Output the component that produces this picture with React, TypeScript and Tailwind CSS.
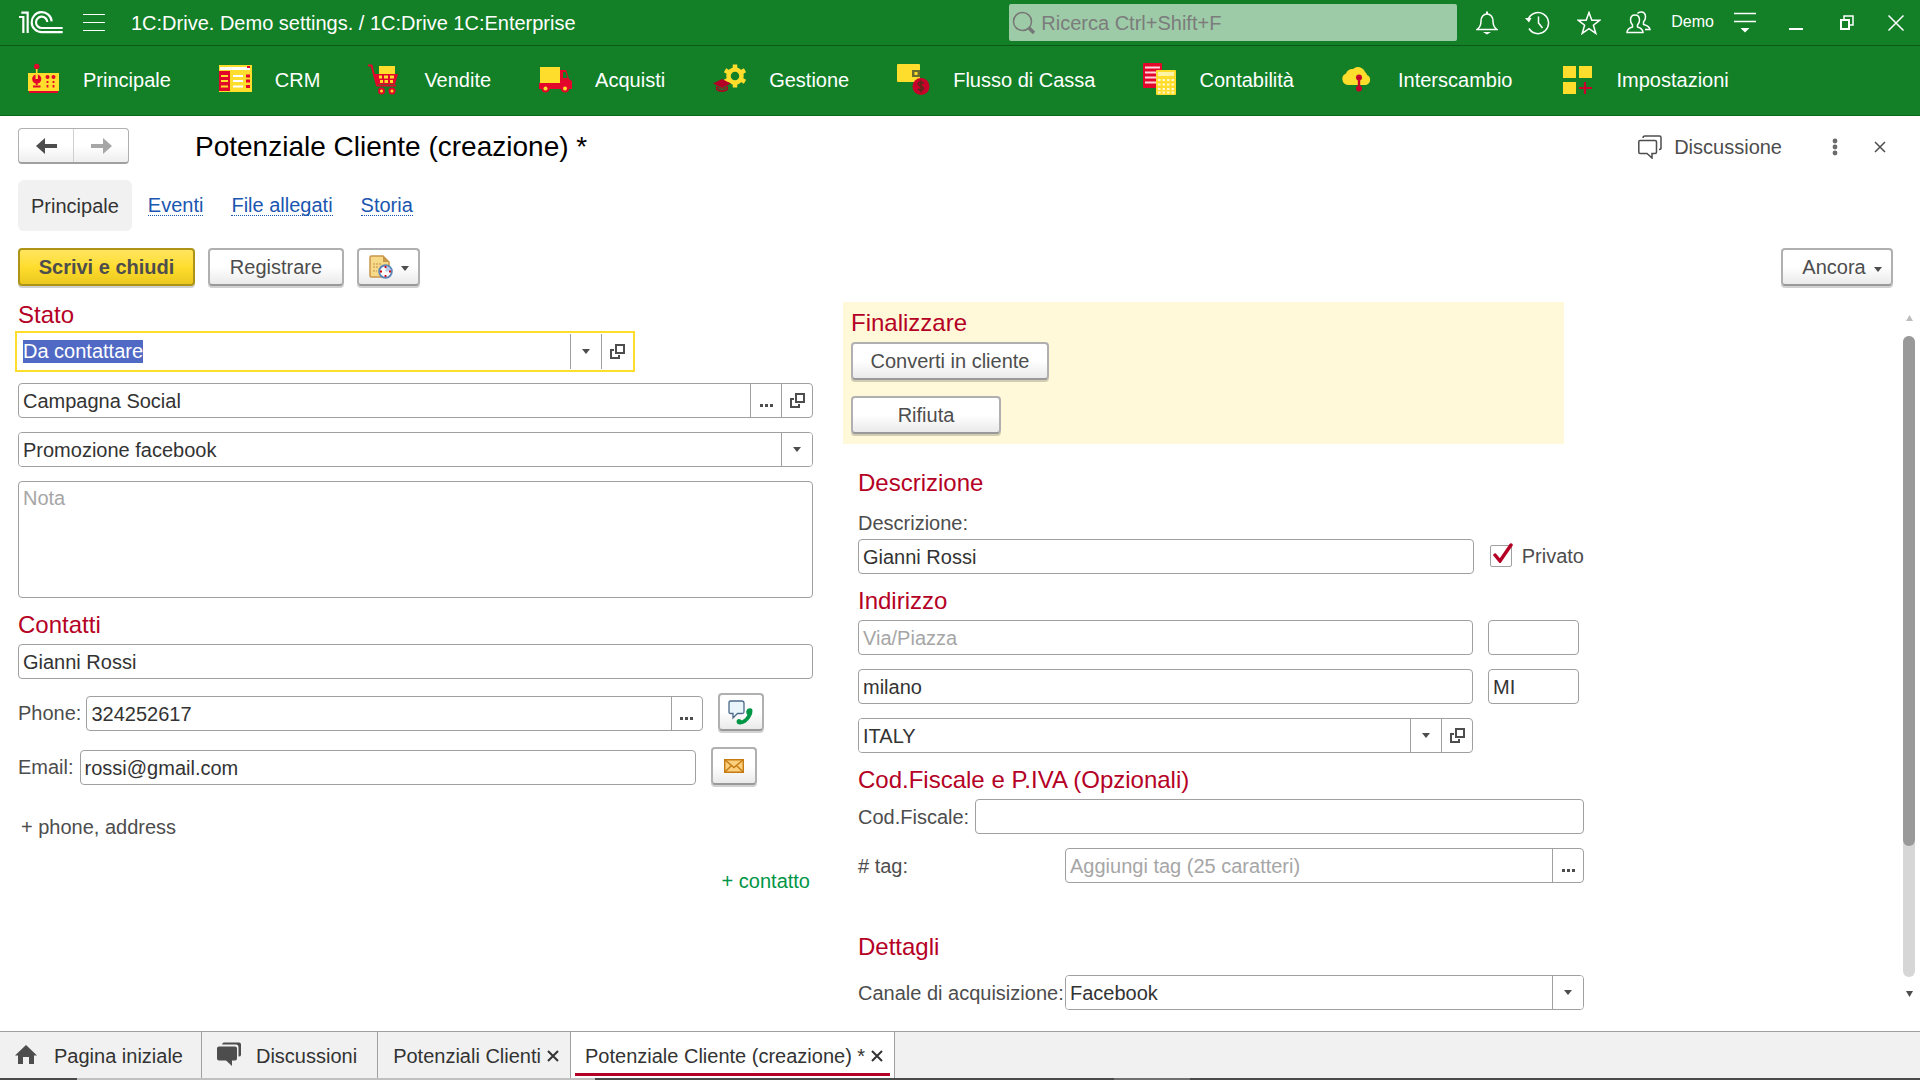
import { useEffect, useRef } from "react";
import type { ReactNode } from "react";

const sections = [
    { name: "Principale", icon: <PanelIcon /> },
    { name: "CRM", icon: <CrmIcon /> },
    { name: "Vendite", icon: <CartIcon /> },
    { name: "Acquisti", icon: <TruckIcon /> },
    { name: "Gestione", icon: <GearIcon /> },
    { name: "Flusso di Cassa", icon: <WalletIcon /> },
    { name: "Contabilità", icon: <LedgerIcon /> },
    { name: "Interscambio", icon: <CloudIcon /> },
    { name: "Impostazioni", icon: <BlocksIcon /> },
];

const YELLOW = "#ffdd2d";
const RED = "#e3062b";
const DARK_RED = "#b50025";

/* ---------- section icons ---------- */

function SectionSvg({ children }: { children: ReactNode }) {
    return (
        <svg width="33" height="33" viewBox="0 0 33 33" fill="none" aria-hidden="true">
            {children}
        </svg>
    );
}

function PanelIcon() {
    return (
        <SectionSvg>
            <rect x="1" y="10" width="31" height="18" fill={YELLOW} />
            <rect x="2" y="28" width="29" height="2" fill={RED} />
            <path d="M9.7 5v6" stroke={YELLOW} strokeWidth="1.6" />
            <circle cx="9.7" cy="3.4" r="2.7" fill={RED} />
            <circle cx="9.7" cy="16" r="4.6" fill={RED} />
            <path d="M9.7 10v6" stroke={YELLOW} strokeWidth="2.4" />
            <path d="M9.7 18v4M6 23.5h7.5" stroke={RED} strokeWidth="2" />
            <circle cx="20.5" cy="14" r="2" fill={RED} />
            <circle cx="26.5" cy="14" r="2" fill={RED} />
            <path d="M20.5 18v2M26.5 18v2M20.5 22v2.5M26.5 22v2.5" stroke={RED} strokeWidth="1.8" />
        </SectionSvg>
    );
}

function CrmIcon() {
    return (
        <SectionSvg>
            <rect x="0" y="2" width="33" height="27" fill={YELLOW} />
            <rect x="1" y="4" width="30" height="3" fill="#fff" />
            <rect x="28" y="3" width="3" height="2" fill={RED} />
            <rect x="0" y="8" width="11" height="20" fill={RED} />
            <path d="M2 13h7M2 18h7M2 23.500h7" stroke={YELLOW} strokeWidth="2" />
            <path d="M14 13h10M14 18h10M14 23.500h10" stroke="#fff" strokeWidth="2" />
            <path d="M27 13h4M27 18h4M27 23.500h4" stroke={RED} strokeWidth="3" />
        </SectionSvg>
    );
}

function CartIcon() {
    return (
        <SectionSvg>
            <rect x="11" y="3" width="16" height="9" fill={YELLOW} />
            <path d="M0 2.500h3.500l5.500 20h19" stroke={RED} strokeWidth="2" />
            <path d="M6 11h24l-3 10H9z" fill={RED} />
            <path d="M11 12.500h3v3h-3zM16 12.500h4v3h-4zM22 12.500h4v3h-4zM12 17h3v3h-3zM16.500 17h3.500v3h-3.500zM22 17h3v3h-3z" fill={YELLOW} />
            <circle cx="13.500" cy="28" r="3.500" fill={RED} />
            <circle cx="24" cy="28" r="3.500" fill={RED} />
            <circle cx="13.500" cy="28" r="1.500" fill={YELLOW} />
            <circle cx="24" cy="28" r="1.500" fill={YELLOW} />
        </SectionSvg>
    );
}

function TruckIcon() {
    return (
        <SectionSvg>
            <rect x="1" y="4" width="20" height="16" fill={YELLOW} />
            <path d="M0 20h21V7h6l3 9 3 2v8H0z" fill={RED} />
            <path d="M24 9h2.500l2 6H24z" fill="#138028" />
            <circle cx="6.500" cy="25.500" r="4" fill={RED} />
            <circle cx="26" cy="25.500" r="4" fill={RED} />
            <circle cx="6.500" cy="25.500" r="2" fill={YELLOW} />
            <circle cx="26" cy="25.500" r="2" fill={YELLOW} />
        </SectionSvg>
    );
}

function GearIcon() {
    return (
        <SectionSvg>
            <circle cx="22" cy="13" r="6.500" stroke={YELLOW} strokeWidth="4.500" />
            <path
                d="M22 1.500v5M22 19.500v5M12 7.300l4.500 2.600M27.500 16.100l4.500 2.600M12 18.700l4.500-2.600M27.500 9.900L32 7.300"
                stroke={YELLOW}
                strokeWidth="4.500"
            />
            <path d="M0 20.500l9-4.500 9 4.500-9 4.500z" fill={DARK_RED} />
            <path d="M3 23l6 3 6-3v4q-6 4-12 0z" fill={DARK_RED} />
            <path d="M4 25.500q5 3 10 0" stroke="#138028" strokeWidth="1" />
        </SectionSvg>
    );
}

function WalletIcon() {
    return (
        <SectionSvg>
            <rect x="0" y="1" width="23" height="18" rx="1" fill={YELLOW} />
            <rect x="15" y="7" width="8" height="7" fill="#6b6b2e" />
            <rect x="17.500" y="9" width="3" height="3" fill={YELLOW} />
            <circle cx="24" cy="23.500" r="8.500" fill="#c8002a" />
            <path
                d="M27 20.500q-3-2.500-5.500-.5c-2 3 5.500 3 5 5.500q-2 3-5.500.5M24 17.500v12"
                stroke="#5a2a1a"
                strokeWidth="1.600"
            />
        </SectionSvg>
    );
}

function LedgerIcon() {
    return (
        <SectionSvg>
            <rect x="0" y="0" width="19" height="25" rx="1" fill={RED} />
            <path d="M2 4.500h15M2 9.500h15M2 14.500h12M2 19.500h12" stroke="#ffd5dc" strokeWidth="2" />
            <rect x="13" y="7" width="20" height="25" rx="1" fill={YELLOW} />
            <rect x="15" y="9" width="16" height="4" fill="#fff3a8" />
            <path d="M15 17h16M15 21.500h16M15 26h16M15 29.500h16" stroke="#fff8cf" strokeWidth="2" strokeDasharray="2.500 2" />
        </SectionSvg>
    );
}

function CloudIcon() {
    return (
        <SectionSvg>
            <path
                d="M6 22a6 6 0 0 1-2-11.500A7 7 0 0 1 11 6a7.500 7.500 0 0 1 12 3 5 5 0 0 1 2 3 5.300 5.300 0 0 1-1 10z"
                fill={YELLOW}
            />
            <path d="M17 15v10" stroke="#c8002a" strokeWidth="2.400" />
            <circle cx="17" cy="14.500" r="3" fill="#c8002a" />
            <circle cx="17" cy="25.500" r="3" fill="#c8002a" />
        </SectionSvg>
    );
}

function BlocksIcon() {
    return (
        <SectionSvg>
            <rect x="2" y="3" width="13" height="12" fill={YELLOW} />
            <rect x="18" y="3" width="13" height="12" fill={YELLOW} />
            <rect x="2" y="19" width="13" height="12" fill={YELLOW} />
            <path d="M24 19v12M18 25h13" stroke="#c8002a" strokeWidth="2.200" />
        </SectionSvg>
    );
}

/* ---------- small glyphs ---------- */

function Logo() {
    return (
        <svg width="44" height="23" viewBox="0 0 132 69" fill="none" stroke="#fff" strokeWidth="6.500" aria-hidden="true">
            <path d="M0 18h13v48M7 5h19v61" />
            <path d="M98 31A30 30 0 1 0 68 63.500h63" />
            <path d="M85 33A17 17 0 1 0 68 51h63" />
        </svg>
    );
}

function Down({ className = "" }: { className?: string }) {
    return (
        <svg width="8" height="5" viewBox="0 0 8 5" fill="#4d4d4d" className={className} aria-hidden="true">
            <path d="M0 0h8L4 5z" />
        </svg>
    );
}

function OpenGlyph() {
    return (
        <svg width="15" height="15" viewBox="0 0 15 15" fill="none" stroke="#4d4d4d" strokeWidth="2" aria-hidden="true">
            <path d="M6 1h8v8H6z" />
            <path d="M4 6H1v8h8v-3" />
        </svg>
    );
}

function Dots() {
    return (
        <svg width="13" height="3" viewBox="0 0 13 3" fill="#4d4d4d" className="mt-2.5" aria-hidden="true">
            <path d="M0 0h3v3H0zM5 0h3v3H5zM10 0h3v3h-3z" />
        </svg>
    );
}

function Cross({ size = 12, stroke = 1 }: { size?: number; stroke?: number }) {
    return (
        <svg width={size} height={size} viewBox="0 0 12 12" fill="none" stroke="currentColor" strokeWidth={stroke} aria-hidden="true">
            <path d="M1 1l10 10M11 1L1 11" />
        </svg>
    );
}

/* ---------- controls ---------- */

function PushButton({ className = "", children, label }: { className?: string; children: ReactNode; label?: string }) {
    return (
        <button
            type="button"
            aria-label={label}
            className={`flex h-[38px] shrink-0 items-center justify-center rounded border-2 border-[#b0b0b0] border-b-[#999] bg-linear-to-b from-white from-50% to-[#eaeaea] text-[#4d4d4d] shadow-[0_2px_0_rgba(0,0,0,0.18)] ${className}`}
        >
            {children}
        </button>
    );
}

function Field({ className = "flex-1", children }: { className?: string; children: ReactNode }) {
    return (
        <div className={`relative flex h-[35px] min-w-0 overflow-hidden rounded border border-[#a0a0a0] bg-white text-[#333] ${className}`}>
            {children}
        </div>
    );
}

function Text({ id, label, value, placeholder }: { id?: string; label?: string; value?: string; placeholder?: string }) {
    return (
        <input
            id={id}
            type="text"
            aria-label={label}
            defaultValue={value}
            placeholder={placeholder}
            className="w-full min-w-0 flex-1 pl-1 outline-none placeholder:text-[#a6a6a6]"
        />
    );
}

function Choice({ id, label, value }: { id?: string; label?: string; value: string }) {
    return (
        <div className="relative flex min-w-0 flex-1">
            <select id={id} aria-label={label} className="w-full appearance-none bg-white pl-1 outline-none">
                <option>{value}</option>
            </select>
            <span className="pointer-events-none absolute inset-y-0 right-0 flex w-[31px] items-center justify-center border-l border-[#a0a0a0]">
                <Down />
            </span>
        </div>
    );
}

function Cell({ label, children }: { label: string; children: ReactNode }) {
    return (
        <button type="button" aria-label={label} className="flex w-[31px] shrink-0 items-center justify-center border-l border-[#a0a0a0]">
            {children}
        </button>
    );
}

function Heading({ className = "", children }: { className?: string; children: ReactNode }) {
    return <h2 className={`text-2xl leading-7 text-[#b50025] ${className}`}>{children}</h2>;
}

/* ---------- page parts ---------- */

function TitleBar() {
    return (
        <div className="flex h-[46px] items-center border-b border-[#0a5a16] pl-[19px] text-white">
            <Logo />
            <button type="button" aria-label="Menu" className="ml-5 flex w-[22px] flex-col gap-[7px]">
                <span className="h-px w-full bg-white" />
                <span className="h-px w-full bg-white" />
                <span className="h-px w-full bg-white" />
            </button>
            <span className="ml-[26px] whitespace-nowrap">1C:Drive. Demo settings. / 1C:Drive 1C:Enterprise</span>
            <div className="ml-auto flex h-[37px] w-[448px] items-center rounded-xs bg-[#9dcba7] pl-[3px]">
                <svg width="24" height="24" viewBox="0 0 24 24" fill="none" stroke="#777" strokeWidth="1.500" aria-hidden="true">
                    <circle cx="10.500" cy="10.500" r="9" />
                    <path d="M17 17l5 5" strokeWidth="3.500" />
                </svg>
                <input
                    type="search"
                    aria-label="Ricerca"
                    placeholder="Ricerca Ctrl+Shift+F"
                    className="min-w-0 flex-1 pl-[5px] text-[#333] outline-none placeholder:text-[#7c7c7c]"
                />
            </div>
            <div className="ml-1 flex h-full items-center">
                <button type="button" aria-label="Notifiche" className="flex w-[51px] justify-center">
                    <svg width="22" height="24" viewBox="0 0 22 24" fill="none" stroke="#fff" strokeWidth="1.500" aria-hidden="true">
                        <path d="M1 18.500c3-2 4-4 4-8.500 0-4 2.500-7 6-7s6 3 6 7c0 4.500 1 6.500 4 8.500z" />
                        <path d="M11 .5V3" strokeWidth="2" />
                        <path d="M7 21h8l-4 2.500z" fill="#fff" stroke="none" />
                    </svg>
                </button>
                <button type="button" aria-label="Cronologia" className="flex w-[51px] justify-center">
                    <svg width="25" height="24" viewBox="0 0 25 24" fill="none" stroke="#fff" strokeWidth="1.500" aria-hidden="true">
                        <path d="M3 9A10.500 10.500 0 1 1 4 17.500" />
                        <path d="M13.500 5.500V12l4 5" />
                        <path d="M0 7l6.500 0L4 11.500z" fill="#fff" stroke="none" />
                    </svg>
                </button>
                <button type="button" aria-label="Preferiti" className="flex w-[51px] justify-center">
                    <svg width="24" height="24" viewBox="0 0 24 24" fill="none" stroke="#fff" strokeWidth="1.500" aria-hidden="true">
                        <path d="M12 1.500l2.800 7.700h8l-6.400 5 2.400 8.200L12 17.600l-6.800 4.800 2.400-8.200-6.400-5h8z" />
                    </svg>
                </button>
                <button type="button" className="flex items-center gap-5 pl-3 text-base">
                    <svg width="25" height="23" viewBox="0 0 25 23" fill="none" stroke="#fff" strokeWidth="1.500" aria-hidden="true">
                        <path d="M1 21.500c0-3.500 2-4.500 5.500-5.500v-2C5 12.500 4.500 11 4.500 9c0-3 1.500-5 4.500-5s4.500 2 4.500 5c0 2-.5 3.500-2 5v2c3.500 1 5.500 2 5.500 5.500z" />
                        <path d="M11.500 2.500C12.300 1.500 13.500 1 15 1c3 0 4.500 2 4.500 5 0 2-.5 3.500-2 5v2.500c4 1 6 2 6.500 5h-5" />
                    </svg>
                    <span className="pb-0.5">Demo</span>
                </button>
                <button type="button" aria-label="Opzioni" className="ml-[9px] flex w-[43px] justify-center">
                    <svg width="22" height="21" viewBox="0 0 22 21" fill="none" stroke="#fff" strokeWidth="1.500" aria-hidden="true">
                        <path d="M0 1.500h22M0 9.500h22" />
                        <path d="M6.500 16h9L11 20.500z" fill="#fff" stroke="none" />
                    </svg>
                </button>
                <button type="button" aria-label="Riduci" className="ml-1 flex w-[51px] justify-center">
                    <span className="mt-3 h-0.5 w-3.5 bg-white" />
                </button>
                <button type="button" aria-label="Ripristina" className="flex w-[51px] justify-center">
                    <svg width="14" height="15" viewBox="0 0 14 15" fill="none" stroke="#fff" strokeWidth="2" aria-hidden="true">
                        <path d="M1 5h8v9H1z" />
                        <path d="M4 4V1h9v9h-3" strokeWidth="1.500" />
                    </svg>
                </button>
                <button type="button" aria-label="Chiudi" className="flex w-12 justify-center">
                    <Cross size={18} />
                </button>
            </div>
        </div>
    );
}

function SectionBar() {
    return (
        <nav className="flex h-[70px] items-center gap-12 border-b border-[#0a6a1c] pb-0.5 pl-[27px] text-white">
            {sections.map((section) => (
                <button type="button" key={section.name} className="flex items-center gap-[23px] whitespace-nowrap">
                    {section.icon}
                    {section.name}
                </button>
            ))}
        </nav>
    );
}

function FormHeader() {
    return (
        <div className="pt-3 pl-[18px]">
            <div className="flex h-9 items-center pr-[18px]">
                <div className="flex h-9 w-[111px] rounded border border-[#b0b0b0] border-b-2 border-b-[#a0a0a0] bg-linear-to-b from-white from-50% to-[#eee]">
                    <button type="button" aria-label="Indietro" className="flex flex-1 items-center justify-center border-r border-[#d0d0d0]">
                        <svg width="21" height="16" viewBox="0 0 21 16" fill="#4d4d4d" aria-hidden="true">
                            <path d="M0 8l9-8v6h12v4H9v6z" />
                        </svg>
                    </button>
                    <button type="button" aria-label="Avanti" className="flex flex-1 items-center justify-center">
                        <svg width="21" height="16" viewBox="0 0 21 16" fill="#a6a6a6" aria-hidden="true">
                            <path d="M21 8l-9-8v6H0v4h12v6z" />
                        </svg>
                    </button>
                </div>
                <h1 className="ml-[66px] pt-px text-[28px] leading-9 text-black">Potenziale Cliente (creazione) *</h1>
                <button type="button" className="ml-auto flex items-center gap-3 pt-0.5 text-[#4d4d4d]">
                    <svg width="24" height="24" viewBox="0 0 24 24" fill="none" stroke="#4d4d4d" strokeWidth="1.500" aria-hidden="true">
                        <path d="M2 5.500h15q1.500 0 1.500 1.500v10q0 1.500-1.500 1.500h-3V23l-5-4.500H2Q.8 18.500.8 17V7Q.8 5.500 2 5.500z" />
                        <path d="M5 3Q5 1 7 1h14.500Q23 1 23 2.500V13q0 1.500-2 1.500" />
                    </svg>
                    Discussione
                </button>
                <button type="button" aria-label="Altre azioni" className="ml-[30px] flex w-[45px] justify-center pt-0.5">
                    <svg width="6" height="18" viewBox="0 0 6 18" fill="#6b6b6b" aria-hidden="true">
                        <circle cx="3" cy="3" r="2.400" />
                        <circle cx="3" cy="9" r="2.400" />
                        <circle cx="3" cy="15" r="2.400" />
                    </svg>
                </button>
                <button type="button" aria-label="Chiudi scheda" className="flex w-[45px] justify-center pt-0.5 text-[#4d4d4d]">
                    <Cross stroke={1.5} />
                </button>
            </div>
            <nav className="mt-4 flex h-[51px] items-center">
                <span className="flex h-full items-center rounded-md bg-[#f1f1f1] px-[13px] text-[#333]">Principale</span>
                <div className="ml-4 flex gap-7 leading-5 text-[#1a56b0]">
                    <a href="#eventi" className="border-b border-dotted border-[#1a56b0]">Eventi</a>
                    <a href="#file" className="border-b border-dotted border-[#1a56b0]">File allegati</a>
                    <a href="#storia" className="border-b border-dotted border-[#1a56b0]">Storia</a>
                </div>
            </nav>
            <div className="mt-[17px] flex gap-[13px] pr-[27px]">
                <button
                    type="button"
                    className="h-[38px] w-[177px] rounded border-2 border-[#ad9419] bg-linear-to-b from-[#ffe55c] via-[#ffdd2d] to-[#ebc81e] font-bold text-[#4d4d4d] shadow-[0_2px_0_rgba(0,0,0,0.18)]"
                >
                    Scrivi e chiudi
                </button>
                <PushButton className="w-[136px]">Registrare</PushButton>
                <PushButton className="w-[63px] gap-2" label="Promemoria">
                    <svg width="24" height="24" viewBox="0 0 24 24" fill="none" aria-hidden="true">
                        <path d="M1 2.500Q1 1 2.500 1H14l6 6v14q0 1-1.500 1h-16Q1 22 1 21z" fill="#f7d98a" stroke="#c9974a" strokeWidth="1.500" />
                        <path d="M14 1v6h6z" fill="#c9974a" />
                        <path d="M4 9h8M4 12h6M4 16h4" stroke="#d3a95c" strokeWidth="1.500" strokeDasharray="2 1" />
                        <circle cx="16.500" cy="16.500" r="6.300" fill="#fff" stroke="#5c86b5" strokeWidth="2" />
                        <path d="M16.500 16.500V11a5.500 5.500 0 0 1 5.500 5.500z" fill="#b5cde8" />
                        <path d="M16.500 11v2M16.500 20v2M11 16.500h2M20 16.500h2" stroke="#d0021b" strokeWidth="1.800" />
                    </svg>
                    <Down className="mt-0.5" />
                </PushButton>
                <PushButton className="ml-auto w-28 gap-2 pl-2.5">
                    Ancora
                    <Down className="mt-1" />
                </PushButton>
            </div>
        </div>
    );
}

function LeadColumn() {
    const status = useRef<HTMLInputElement>(null);

    // the form opens with the status field focused and its text selected
    useEffect(() => {
        status.current?.focus();
        status.current?.select();
    }, []);

    return (
        <div>
            <Heading>Stato</Heading>
            <div className="mt-0.5 -ml-[3px] flex w-[78%] border-2 border-[#ffdd2d] p-px text-[#333]">
                <input
                    ref={status}
                    type="text"
                    aria-label="Stato"
                    defaultValue="Da contattare"
                    className="h-[35px] min-w-0 flex-1 pl-[5px] outline-none selection:bg-[#5069c4] selection:text-white"
                />
                <Cell label="Scegli stato">
                    <Down />
                </Cell>
                <Cell label="Apri stato">
                    <OpenGlyph />
                </Cell>
            </div>
            <div className="mt-[11px] flex flex-col gap-3.5">
                <Field className="">
                    <Text label="Campagna" value="Campagna Social" />
                    <Cell label="Scegli campagna">
                        <Dots />
                    </Cell>
                    <Cell label="Apri campagna">
                        <OpenGlyph />
                    </Cell>
                </Field>
                <Field className="">
                    <Choice label="Fonte" value="Promozione facebook" />
                </Field>
                <textarea
                    aria-label="Nota"
                    placeholder="Nota"
                    className="h-[117px] resize-none rounded border border-[#a0a0a0] px-1 pt-1 outline-none placeholder:text-[#a6a6a6]"
                />
            </div>

            <Heading className="mt-[13px]">Contatti</Heading>
            <Field className="mt-[5px]">
                <Text label="Contatto" value="Gianni Rossi" />
            </Field>
            <div className="mt-3.5 flex items-end">
                <label htmlFor="phone" className="pr-[5px] leading-[35px] text-[#4d4d4d]">Phone:</label>
                <Field className="w-[77.5%]">
                    <Text id="phone" value="324252617" />
                    <Cell label="Scegli telefono">
                        <Dots />
                    </Cell>
                </Field>
                <PushButton className="ml-[15px] w-[46px]" label="Chiama">
                    <svg width="25" height="25" viewBox="0 0 25 25" fill="none" aria-hidden="true">
                        <path d="M2.500 1h11Q16 1 16 3v9q0 1.500-2 1.500H9.500L5 18v-4.500H2.500Q1 13.500 1 12V3q0-2 1.500-2z" fill="#eaf4fb" stroke="#4d6a8a" strokeWidth="1.300" />
                        <path
                            d="M20.500 8.500q3.500-1 4 1.500.5 4-2.500 8-3.500 5.500-9.500 6.500-3.500.3-4-2.500-.2-2.500 2-3 2-.2 3.500 1.500 3.500-1.500 5.500-5.500-1.500-1.500-1.300-3.500.4-2.500 2.300-3z"
                            fill="#009646"
                        />
                    </svg>
                </PushButton>
            </div>
            <div className="mt-4 flex items-end">
                <label htmlFor="email" className="pr-1.5 leading-[35px] text-[#4d4d4d]">Email:</label>
                <Field className="w-[77.5%]">
                    <Text id="email" value="rossi@gmail.com" />
                </Field>
                <PushButton className="ml-[15px] w-[46px]" label="Invia email">
                    <svg width="20" height="14" viewBox="0 0 20 14" fill="none" stroke="#c67a12" strokeWidth="1.400" aria-hidden="true">
                        <path d="M.7.7h18.600v12.600H.7z" fill="#fbcf7d" />
                        <path d="M.7.7L10 8.500 19.300.7M.7 13.300L7.500 6.500M19.300 13.300l-6.800-6.800" />
                    </svg>
                </PushButton>
            </div>
            <button type="button" className="mt-[30px] block pl-[3px] leading-6 text-[#4d4d4d]">+ phone, address</button>
            <button type="button" className="mt-[30px] mr-[3px] ml-auto block leading-6 text-[#009646]">+ contatto</button>
        </div>
    );
}

function DetailColumn() {
    return (
        <div className="text-[#4d4d4d]">
            <section className="mt-px mr-5 -ml-[15px] flex flex-col items-start bg-[#fff9da] px-2 pt-[7px] pb-2.5">
                <Heading>Finalizzare</Heading>
                <PushButton className="mt-[5px] w-[198px]">Converti in cliente</PushButton>
                <PushButton className="mt-4 w-[150px]">Rifiuta</PushButton>
            </section>

            <Heading className="mt-[25px]">Descrizione</Heading>
            <label htmlFor="description" className="mt-3.5 block leading-6">Descrizione:</label>
            <div className="mt-1 flex items-center">
                <Field>
                    <Text id="description" value="Gianni Rossi" />
                </Field>
                <label className="ml-4 flex items-center gap-2.5 pb-0.5">
                    <span className="relative flex">
                        <input
                            type="checkbox"
                            defaultChecked
                            className="peer size-[22px] appearance-none rounded-xs border border-[#a0a0a0] bg-white"
                        />
                        <svg
                            width="20"
                            height="20"
                            viewBox="0 0 20 20"
                            fill="none"
                            stroke="#b50025"
                            strokeWidth="3.500"
                            strokeLinecap="round"
                            className="pointer-events-none absolute -top-0.5 left-[3px] hidden peer-checked:block"
                            aria-hidden="true"
                        >
                            <path d="M2 12l5 6L18 2" />
                        </svg>
                    </span>
                    Privato
                </label>
            </div>

            <Heading className="mt-[13px]">Indirizzo</Heading>
            <div className="mt-[5px] mr-[5px] grid grid-cols-[1fr_91px] gap-x-[15px] gap-y-3.5">
                <Field>
                    <Text label="Via o piazza" placeholder="Via/Piazza" />
                </Field>
                <Field>
                    <Text label="CAP" />
                </Field>
                <Field>
                    <Text label="Città" value="milano" />
                </Field>
                <Field>
                    <Text label="Provincia" value="MI" />
                </Field>
                <Field>
                    <Choice label="Paese" value="ITALY" />
                    <Cell label="Apri paese">
                        <OpenGlyph />
                    </Cell>
                </Field>
            </div>

            <Heading className="mt-[13px]">Cod.Fiscale e P.IVA (Opzionali)</Heading>
            <div className="mt-[5px] flex items-center">
                <label htmlFor="taxcode" className="pr-1.5">Cod.Fiscale:</label>
                <Field>
                    <Text id="taxcode" />
                </Field>
            </div>
            <div className="mt-3.5 flex items-center">
                <label htmlFor="tag" className="w-[207px] shrink-0">#&nbsp;tag:</label>
                <Field>
                    <Text id="tag" placeholder="Aggiungi tag (25 caratteri)" />
                    <Cell label="Scegli tag">
                        <Dots />
                    </Cell>
                </Field>
            </div>

            <Heading className="mt-[50px]">Dettagli</Heading>
            <div className="mt-3.5 flex items-center">
                <label htmlFor="channel" className="w-[207px] shrink-0 whitespace-nowrap">Canale di acquisizione:</label>
                <Field>
                    <Choice id="channel" value="Facebook" />
                </Field>
            </div>
        </div>
    );
}

function ScrollRail() {
    return (
        <div className="flex w-3 shrink-0 flex-col items-center pt-3.5 pb-[34px]">
            <button type="button" aria-label="Scorri su">
                <svg width="7" height="6" viewBox="0 0 7 6" fill="#bdbdbd" className="block" aria-hidden="true">
                    <path d="M0 6h7L3.500 0z" />
                </svg>
            </button>
            <div className="mt-[15px] mb-3.5 w-full flex-1 rounded-full bg-[#d6d6d6]">
                <div className="h-[79.5%] rounded-full bg-[#999]" />
            </div>
            <button type="button" aria-label="Scorri giù">
                <svg width="7" height="6" viewBox="0 0 7 6" fill="#4d4d4d" className="block" aria-hidden="true">
                    <path d="M0 0h7L3.500 6z" />
                </svg>
            </button>
        </div>
    );
}

function WindowTabs() {
    return (
        <footer>
            <div className="flex h-[47px] border-t border-[#a0a0a0] bg-[#f1f1f1] whitespace-nowrap text-[#333]">
                <button type="button" className="flex items-center gap-[17px] border-r border-[#a0a0a0] pt-0.5 pr-[18px] pl-[15px]">
                    <svg width="22" height="19" viewBox="0 0 22 19" fill="#4d4d4d" className="mb-1" aria-hidden="true">
                        <path d="M11 0l11 10.500h-3V19h-5v-7H8v7H3v-8.500H0z" />
                    </svg>
                    Pagina iniziale
                </button>
                <button type="button" className="flex items-center gap-[15px] border-r border-[#a0a0a0] pt-0.5 pr-5 pl-[15px]">
                    <svg width="24" height="24" viewBox="0 0 24 24" fill="#4d4d4d" className="mb-1" aria-hidden="true">
                        <path d="M2 4.500h16q2 0 2 2v10q0 2-2 2h-3V24l-6-5.500H2q-2 0-2-2v-10q0-2 2-2z" />
                        <path d="M5 2.500Q5.500.5 7 .5h15q2 0 2 2V13q0 1.500-2.500 1.500V5q0-2.500-2-2.500z" />
                    </svg>
                    Discussioni
                </button>
                <div className="flex items-center gap-1.5 border-r border-[#a0a0a0] pt-0.5 pr-[11px] pl-[15px]">
                    <button type="button">Potenziali Clienti</button>
                    <button type="button" aria-label="Chiudi Potenziali Clienti">
                        <Cross stroke={2} />
                    </button>
                </div>
                <div className="relative flex items-center gap-1.5 border-r border-[#a0a0a0] bg-white pt-0.5 pr-[11px] pl-3.5">
                    <button type="button">Potenziale Cliente (creazione) *</button>
                    <button type="button" aria-label="Chiudi Potenziale Cliente">
                        <Cross stroke={2} />
                    </button>
                    <span className="absolute inset-x-1 bottom-0.5 h-[3px] bg-[#b50025]" />
                </div>
            </div>
            <div className="flex h-0.5 bg-[#4a4a4a]">
                <span className="w-[4%]" />
                <span className="w-[27%] bg-[#c0c0c0]" />
                <span className="w-[27%]" />
                <span className="w-[4%] bg-[#707070]" />
            </div>
        </footer>
    );
}

export default function App() {
    return (
        <div className="flex h-screen flex-col overflow-hidden bg-white font-['Liberation_Sans',Arial,sans-serif] text-xl leading-6">
            <header className="bg-[#138028]">
                <TitleBar />
                <SectionBar />
            </header>
            <FormHeader />
            <main className="mt-[15px] flex min-h-0 flex-1 pr-[5px] pl-[18px]">
                <div className="grid flex-1 grid-cols-[795fr_726fr_274fr] gap-x-[45px]">
                    <LeadColumn />
                    <DetailColumn />
                </div>
                <ScrollRail />
            </main>
            <WindowTabs />
        </div>
    );
}
